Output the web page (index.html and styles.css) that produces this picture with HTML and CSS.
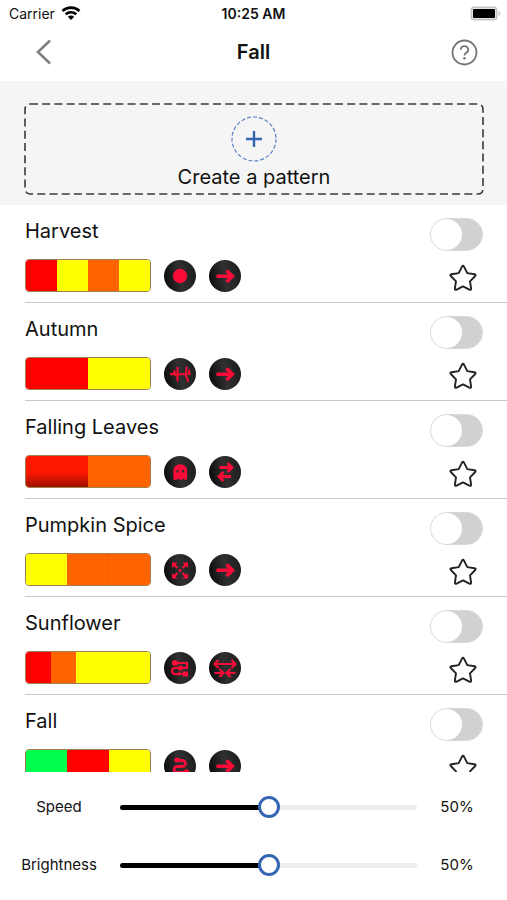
FILE: index.html
```html
<!DOCTYPE html>
<html lang="en">
<head>
<meta charset="utf-8">
<meta name="viewport" content="width=device-width, initial-scale=1">
<title>Fall</title>
<link rel="stylesheet" href="styles.css">
</head>
<body>
<svg class="defs" aria-hidden="true">
  <defs>
    <linearGradient id="disc" x1="0" y1="0.6" x2="1" y2="0.4">
      <stop offset="0" stop-color="#0c0c0c"/>
      <stop offset="0.5" stop-color="#303030"/>
      <stop offset="1" stop-color="#1e1e1e"/>
    </linearGradient>
    <symbol id="i-right" viewBox="0 0 32 32">
      <path class="line thick" d="M7.500 16.200H23.500M17.500 10.500l6 5.700-6 5.700"/>
    </symbol>
    <symbol id="i-dot" viewBox="0 0 32 32"><circle class="solid" cx="16" cy="16" r="7.200"/></symbol>
    <symbol id="i-pulse" viewBox="0 0 32 32">
      <path class="line thin" d="M6 16.300h3l1.500-2.500 1.200 4.500M11.500 16.300h2M13.500 9v14.500M13.500 16.300h8M22.800 8.500l-1 8 2.500 7.500M24 17l1.200-3.500.8 3"/>
    </symbol>
    <symbol id="i-ghost" viewBox="0 0 32 32">
      <path class="solid" fill-rule="evenodd" d="M9.500 23.800V14a6.500 5.500 0 0 1 13.500 0v9.800h-2.200l-1.500-1.300-1.500 1.300h-2.200L14 22.500l-1.300 1.300zM12.500 14v2.500h2V14zM18 14v2.500h2V14z"/>
    </symbol>
    <symbol id="i-swap" viewBox="0 0 32 32">
      <path class="line heavy" d="M10.500 11.500h12M18.500 7l4.500 4.500-4.500 4.500M22 20.500H10M14.500 16L10 20.500l4.500 4.500"/>
    </symbol>
    <symbol id="i-expand" viewBox="0 0 32 32">
      <path class="line" d="M13.500 14l-3.500-3.500M18.500 14l3.500-3.500M13.500 19l-3.500 3.500M18.500 19l3.500 3.500"/>
      <path class="solid" d="M8 8.500h5.500l-5.500 5.500zM24 8.500h-5.500l5.500 5.500zM8 24.500v-5.500l5.500 5.500zM24 24.500v-5.500l-5.500 5.500z"/>
      <circle class="solid" cx="16" cy="16.500" r="1.400"/>
    </symbol>
    <symbol id="i-route" viewBox="0 0 32 32">
      <path class="line" d="M11 11h12v5h-12a3 3 0 0 0 0 6h10"/>
      <circle class="solid" cx="11" cy="11" r="3"/><circle class="solid" cx="16.500" cy="16" r="2.600"/>
      <path class="solid" d="M19 19.500h5v5h-5zM15 19l-1 5 3.500-2z"/>
    </symbol>
    <symbol id="i-snake" viewBox="0 0 32 32">
      <path class="line heavy" d="M12 10.500h6a3.500 3 0 0 1 0 6h-5a3 3 0 0 0 0 6h10"/>
      <circle class="solid" cx="13" cy="10" r="2.600"/><circle class="solid" cx="22.500" cy="22" r="2.800"/>
    </symbol>
    <symbol id="i-inout" viewBox="0 0 32 32">
      <path class="line" d="M6 12h20M9.500 8L5.500 12l4 4M22.500 8l4 4-4 4M5.500 21H14M10.500 17l4 4-4 4M26.500 21H18M21.500 17L17.500 21l4 4"/>
    </symbol>
    <symbol id="i-star" viewBox="0 0 28 28">
      <path class="outline" d="M13 2.600q1-1.600 2 0l3.300 6.500 7.200 1.100q1.900.4.700 1.800l-5.200 5.300 1.100 7.200q.1 1.900-1.700 1.200L14 22.400l-6.400 3.300q-1.800.7-1.700-1.200L7 17.300 1.800 12q-1.200-1.400.7-1.800l7.200-1.100z"/>
    </symbol>
  </defs>
</svg>
<div class="app">
  <div class="status">
    <div class="carrier"><span>Carrier</span>
      <svg width="20" height="15" viewBox="0 0 20 15" aria-hidden="true"><path class="wifi" d="M1.500 5a12.300 12.300 0 0 1 17 0M4.700 8.300a7.700 7.700 0 0 1 10.600 0"/><path d="M10 14l-3.200-3.300a4.600 4.600 0 0 1 6.400 0z"/></svg>
    </div>
    <span class="time">10:25 AM</span>
    <svg class="battery" width="31" height="16" viewBox="0 0 31 16" aria-hidden="true"><rect class="shell" x="0.500" y="0.500" width="27" height="14" rx="3.500"/><rect class="well" x="2" y="2" width="24" height="11" rx="2"/><rect x="3" y="3" width="22" height="9" rx="1"/><path class="shell" d="M28.500 5q2 .8 2 2.500t-2 2.500z"/></svg>
  </div>
  <header class="bar">
    <button class="icon-btn" aria-label="Back"><svg width="28" height="28" viewBox="0 0 28 28"><path class="chevron" d="M21 2.500L9 14 21 25.500"/></svg></button>
    <h1>Fall</h1>
    <button class="icon-btn" aria-label="Help"><svg width="28" height="28" viewBox="0 0 28 28"><circle class="help" cx="14.500" cy="14.500" r="12"/><path class="help" d="M10.800 11.700a3.700 3.500 0 1 1 5.500 3q-1.800 1.100-1.800 2.800"/><circle class="help-dot" cx="14.500" cy="20.300" r="1.300"/></svg></button>
  </header>
  <section class="create-area">
    <button class="create">
      <svg class="frame" width="100%" height="100%" aria-hidden="true"><rect x="0" y="0" width="100%" height="100%" rx="5"/></svg>
      <svg width="46" height="46" viewBox="0 0 46 46" aria-hidden="true"><circle class="ring" cx="23" cy="23" r="22"/><path class="plus" d="M23 15v16M15 23h16"/></svg>
      <span>Create a pattern</span>
    </button>
  </section>
  <main class="list">
    <article class="row">
      <h2><label for="t1">Harvest</label></h2><input class="toggle" type="checkbox" role="switch" id="t1">
      <div class="details"><div class="swatch"><i class="red"></i><i class="yellow"></i><i class="orange"></i><i class="yellow"></i></div>
        <svg class="disc"><circle cx="16" cy="16" r="16"/><use href="#i-dot"/></svg><svg class="disc"><circle cx="16" cy="16" r="16"/><use href="#i-right"/></svg></div>
      <button class="star" aria-label="Favorite Harvest"><svg width="28" height="28"><use href="#i-star"/></svg></button>
    </article>
    <article class="row">
      <h2><label for="t2">Autumn</label></h2><input class="toggle" type="checkbox" role="switch" id="t2">
      <div class="details"><div class="swatch"><i class="red"></i><i class="yellow"></i></div>
        <svg class="disc"><circle cx="16" cy="16" r="16"/><use href="#i-pulse"/></svg><svg class="disc"><circle cx="16" cy="16" r="16"/><use href="#i-right"/></svg></div>
      <button class="star" aria-label="Favorite Autumn"><svg width="28" height="28"><use href="#i-star"/></svg></button>
    </article>
    <article class="row">
      <h2><label for="t3">Falling Leaves</label></h2><input class="toggle" type="checkbox" role="switch" id="t3">
      <div class="details"><div class="swatch"><i class="ember"></i><i class="orange"></i></div>
        <svg class="disc"><circle cx="16" cy="16" r="16"/><use href="#i-ghost"/></svg><svg class="disc"><circle cx="16" cy="16" r="16"/><use href="#i-swap"/></svg></div>
      <button class="star" aria-label="Favorite Falling Leaves"><svg width="28" height="28"><use href="#i-star"/></svg></button>
    </article>
    <article class="row">
      <h2><label for="t4">Pumpkin Spice</label></h2><input class="toggle" type="checkbox" role="switch" id="t4">
      <div class="details"><div class="swatch"><i class="yellow"></i><i class="orange"></i><i class="orange seam"></i></div>
        <svg class="disc"><circle cx="16" cy="16" r="16"/><use href="#i-expand"/></svg><svg class="disc"><circle cx="16" cy="16" r="16"/><use href="#i-right"/></svg></div>
      <button class="star" aria-label="Favorite Pumpkin Spice"><svg width="28" height="28"><use href="#i-star"/></svg></button>
    </article>
    <article class="row">
      <h2><label for="t5">Sunflower</label></h2><input class="toggle" type="checkbox" role="switch" id="t5">
      <div class="details"><div class="swatch"><i class="red"></i><i class="orange"></i><i class="yellow"></i><i class="yellow"></i><i class="yellow"></i></div>
        <svg class="disc"><circle cx="16" cy="16" r="16"/><use href="#i-route"/></svg><svg class="disc"><circle cx="16" cy="16" r="16"/><use href="#i-inout"/></svg></div>
      <button class="star" aria-label="Favorite Sunflower"><svg width="28" height="28"><use href="#i-star"/></svg></button>
    </article>
    <article class="row">
      <h2><label for="t6">Fall</label></h2><input class="toggle" type="checkbox" role="switch" id="t6">
      <div class="details"><div class="swatch"><i class="green"></i><i class="red"></i><i class="yellow"></i></div>
        <svg class="disc"><circle cx="16" cy="16" r="16"/><use href="#i-snake"/></svg><svg class="disc"><circle cx="16" cy="16" r="16"/><use href="#i-right"/></svg></div>
      <button class="star" aria-label="Favorite Fall"><svg width="28" height="28"><use href="#i-star"/></svg></button>
    </article>
  </main>
  <footer class="controls">
    <div class="control"><label for="speed">Speed</label><input type="range" id="speed" min="0" max="100" value="50"><output for="speed">50%</output></div>
    <div class="control"><label for="brightness">Brightness</label><input type="range" id="brightness" min="0" max="100" value="50"><output for="brightness">50%</output></div>
  </footer>
</div>
</body>
</html>
```
FILE: styles.css
```css
* { box-sizing: border-box; }
body { margin: 0; background: #fff; color: #111; font-family: Inter, "Liberation Sans", sans-serif; }
button { padding: 0; border: 0; background: none; color: inherit; font: inherit; }
svg { display: block; flex: none; }
.defs { position: absolute; width: 0; height: 0; }
.app { display: flex; flex-direction: column; height: 100vh; }

.status { display: grid; grid-template-columns: 1fr auto 1fr; align-items: center; height: 27px; padding: 0 6px; font-size: 14px; }
.carrier { display: flex; align-items: center; gap: 6px; padding-left: 3px; }
.wifi { fill: none; stroke: #000; stroke-width: 2.6; }
.time { font-weight: 600; }
.battery { justify-self: end; }
.shell { fill: #c4c4c4; }
.well { fill: #e4e4e4; }

.bar { display: flex; align-items: center; justify-content: space-between; height: 54px; padding: 0 29px 4px; }
.bar h1 { margin: 0; font-size: 20px; font-weight: 600; line-height: 24px; }
.chevron { fill: none; stroke: #808080; stroke-width: 2.6; }
.help { fill: none; stroke: #757575; stroke-width: 1.8; }
.help-dot { fill: #757575; }

.create-area { padding: 23px 24px 11px 25px; background: #f5f5f5; }
.create { position: relative; display: flex; flex-direction: column; align-items: center; gap: 2px; width: 100%; height: 90px; padding-top: 12px; font-size: 20px; line-height: 26px; }
.frame { position: absolute; inset: 0; overflow: visible; }
.frame rect { fill: none; stroke: #3a3a3a; stroke-width: 1.6; stroke-dasharray: 8 4.2; }
.ring { fill: none; stroke: #5f83c4; stroke-width: 1.2; stroke-dasharray: 4 2; }
.plus { fill: none; stroke: #3465b0; stroke-width: 2.4; }

.list { flex: 1; min-height: 0; overflow: hidden; }
.row { display: grid; grid-template-columns: 1fr auto; row-gap: 8px; align-content: start; height: 98px; margin-left: 25px; padding: 13px 24px 0 0; border-bottom: 1px solid #c8c8c8; }
.row h2 { margin: 0; font-size: 20px; font-weight: 400; line-height: 26px; }
.toggle { appearance: none; display: flex; width: 53px; height: 33px; margin: 0; border: 1px solid #d8d8d8; border-radius: 17px; background: #d1d1d1; }
.toggle::before { content: ""; width: 31px; height: 31px; border-radius: 50%; background: #fff; }
.toggle:checked { justify-content: flex-end; background: #3465b0; }
.details { display: flex; align-items: center; gap: 13px; height: 33px; }
.swatch { display: flex; width: 126px; height: 33px; overflow: hidden; border: 1px solid #a08050; border-radius: 4px; }
.swatch i { flex: 1; }
.red { background: #ff0000; }
.yellow { background: #ffff00; }
.orange { background: #ff6400; }
.green { background: #00ff4c; }
.ember { background: linear-gradient(#ff1800 50%, #a01000); }
.seam { border-left: 1px solid #ee5c00; }
.disc { width: 32px; height: 32px; }
.disc > circle { fill: url(#disc); }
.line { fill: none; stroke: #fb0c38; stroke-width: 2.2; }
.thick { stroke-width: 3.4; }
.heavy { stroke-width: 2.8; }
.thin { stroke-width: 2; }
.solid { fill: #fb0c38; }
.star { align-self: end; justify-self: end; height: 28px; margin: 0 6px 0 0; }
.outline { fill: none; stroke: #222; stroke-width: 1.9; stroke-linejoin: round; }

.controls { padding: 6px 12px 6px 0; background: #fff; }
.control { display: grid; grid-template-columns: 118px 1fr 76px; column-gap: 2px; align-items: center; height: 58px; font-size: 15px; line-height: 18px; text-align: center; }
.control input { appearance: none; width: 100%; height: 24px; margin: 0; background: none; }
.control input::-webkit-slider-runnable-track { height: 5px; border-radius: 3px; background: linear-gradient(90deg, #000 50%, #ededed 50%); }
.control input::-webkit-slider-thumb { appearance: none; width: 22px; height: 22px; margin-top: -9px; border: 3px solid #3465b0; border-radius: 50%; background: #fff; }
```
